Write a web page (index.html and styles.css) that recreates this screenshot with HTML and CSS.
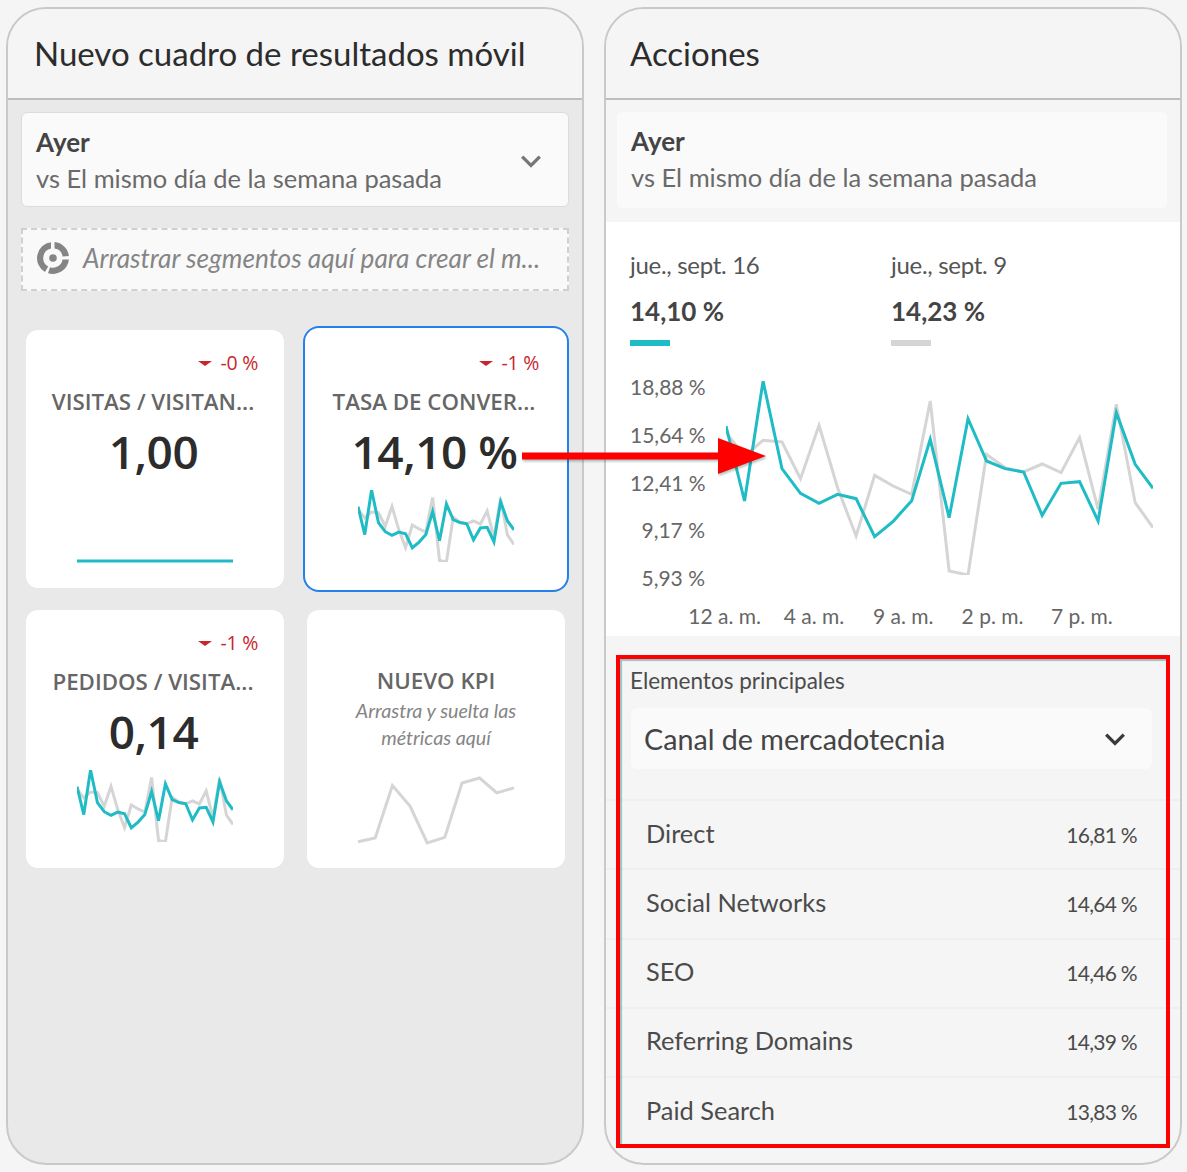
FILE: index.html
```html
<!DOCTYPE html>
<html lang="es">
<head>
    <meta charset="UTF-8">
    <title>Nuevo cuadro de resultados móvil</title>
    <link rel="stylesheet" href="styles.css">
</head>
<body>
    <svg class="defs" width="0" height="0">
        <symbol id="trend" viewBox="318 65 1175 582" preserveAspectRatio="none">
            <polyline class="line-grey" points="318,220 369,290 420,243 472,248 523,358 574,198 625,385 676,530 727,348 778,380 829,405 880,125 932,635 984,647 1035,285 1086,325 1137,338 1188,314 1240,340 1291,235 1342,450 1392,135 1444,430 1493,505"/>
            <polyline class="line-teal" points="318,200 369,425 420,65 472,328 523,402 574,432 625,405 676,418 727,532 778,486 829,424 880,240 932,475 984,178 1035,305 1086,328 1137,338 1188,468 1240,372 1291,367 1342,485 1392,160 1444,315 1493,387"/>
        </symbol>
    </svg>

    <div class="screen">
        <section class="phone phone-left">
            <header class="phone-title">Nuevo cuadro de resultados móvil</header>

            <div class="date-picker">
                <div>
                    <div class="date-main">Ayer</div>
                    <div class="date-sub">vs El mismo día de la semana pasada</div>
                </div>
                <svg class="chevron chevron-grey" viewBox="0 0 20 12"><path d="M2 2l8 8 8-8"/></svg>
            </div>

            <div class="segment-drop">
                <svg class="segment-icon" viewBox="0 0 32 32">
                    <path d="M14 .2A16 16 0 0 0 8 29.9l3.2-5.5A9.6 9.6 0 0 1 14 6.6z"/>
                    <path d="M17.5 .1A16 16 0 0 1 31.9 14l-6.3.4A9.6 9.6 0 0 0 17.5 6.5z"/>
                    <path d="M31.9 17.5A16 16 0 0 1 11 31.2l2-6A9.6 9.6 0 0 0 25.5 17.5z"/>
                    <circle cx="16" cy="16" r="3.8"/>
                </svg>
                <span class="segment-text">Arrastrar segmentos aquí para crear el m...</span>
            </div>

            <div class="kpi-grid">
                <div class="kpi-card">
                    <div class="kpi-delta"><span class="delta-arrow"></span>-0 %</div>
                    <div class="kpi-name">VISITAS / VISITAN...</div>
                    <div class="kpi-value">1,00</div>
                    <svg class="spark spark-flat" viewBox="0 0 156 4"><line class="line-teal" x1="0" y1="2" x2="156" y2="2"/></svg>
                </div>
                <div class="kpi-card kpi-selected">
                    <div class="kpi-delta"><span class="delta-arrow"></span>-1 %</div>
                    <div class="kpi-name">TASA DE CONVER...</div>
                    <div class="kpi-value">14,10 %</div>
                    <svg class="spark"><use href="#trend"/></svg>
                </div>
                <div class="kpi-card">
                    <div class="kpi-delta"><span class="delta-arrow"></span>-1 %</div>
                    <div class="kpi-name">PEDIDOS / VISITA...</div>
                    <div class="kpi-value">0,14</div>
                    <svg class="spark"><use href="#trend"/></svg>
                </div>
                <div class="kpi-card kpi-new">
                    <div class="kpi-name">NUEVO KPI</div>
                    <div class="kpi-hint">Arrastra y suelta las<br>métricas aquí</div>
                    <svg class="spark" viewBox="958 530 426 197" preserveAspectRatio="none">
                        <polyline class="line-grey" points="958,723 1005,712 1052,553 1100,615 1147,727 1195,710 1242,545 1290,530 1337,575 1384,560"/>
                    </svg>
                </div>
            </div>
        </section>

        <section class="phone phone-right">
            <header class="phone-title phone-title-right">Acciones</header>

            <div class="date-plain">
                <div class="date-main">Ayer</div>
                <div class="date-sub">vs El mismo día de la semana pasada</div>
            </div>

            <div class="chart-panel">
                <div class="legend">
                    <div class="legend-item">
                        <div class="legend-date">jue., sept. 16</div>
                        <div class="legend-value">14,10 %</div>
                        <div class="legend-swatch swatch-teal"></div>
                    </div>
                    <div class="legend-item">
                        <div class="legend-date">jue., sept. 9</div>
                        <div class="legend-value">14,23 %</div>
                        <div class="legend-swatch swatch-grey"></div>
                    </div>
                </div>
                <div class="chart-body">
                    <div class="y-axis">
                        <span>18,88 %</span>
                        <span>15,64 %</span>
                        <span>12,41 %</span>
                        <span>9,17 %</span>
                        <span>5,93 %</span>
                    </div>
                    <svg class="main-chart"><use href="#trend"/></svg>
                </div>
                <div class="x-axis">
                    <span>12 a. m.</span>
                    <span>4 a. m.</span>
                    <span>9 a. m.</span>
                    <span>2 p. m.</span>
                    <span>7 p. m.</span>
                </div>
            </div>

            <div class="top-items">
                <div class="top-label">Elementos principales</div>
                <div class="dim-picker">
                    <span>Canal de mercadotecnia</span>
                    <svg class="chevron chevron-dark" viewBox="0 0 20 12"><path d="M2 2l8 8 8-8"/></svg>
                </div>
                <ul class="top-list">
                    <li><span>Direct</span><span class="top-num">16,81 %</span></li>
                    <li><span>Social Networks</span><span class="top-num">14,64 %</span></li>
                    <li><span>SEO</span><span class="top-num">14,46 %</span></li>
                    <li><span>Referring Domains</span><span class="top-num">14,39 %</span></li>
                    <li><span>Paid Search</span><span class="top-num">13,83 %</span></li>
                </ul>
            </div>
        </section>

        <!-- annotations drawn over the screenshots -->
        <svg class="callout-arrow" viewBox="0 0 244 40">
            <path d="M0 16.5h196V2l48 18-48 18V23.5H0z"/>
        </svg>
        <div class="callout-box"></div>
    </div>
</body>
</html>
```

FILE: styles.css
```css
* {
    box-sizing: border-box;
}
body {
    margin: 0;
    background: #f5f5f5;
    font-family: Lato, "Open Sans", sans-serif;
    color: #4b4b4b;
}
.defs {
    position: absolute;
}
.screen {
    position: relative;
    width: 1187px;
    height: 1172px;
    padding: 7px 5px 7px 6px;
    display: flex;
    gap: 20px;
}
.phone {
    flex: none;
    width: 578px;
    height: 1158px;
    border: 2px solid #c9c9c9;
    border-radius: 40px;
    overflow: hidden;
}
.phone-left {
    background: #e9e9e9;
}
.phone-right {
    background: #f5f5f5;
}
.phone-title {
    height: 91px;
    padding: 23px 0 0 26px;
    background: #f5f5f5;
    border-bottom: 2px solid #bdbdbd;
    font-size: 33px;
    line-height: 42px;
    color: #2c2c2c;
}
.phone-title-right {
    padding-left: 24px;
}

.date-picker {
    margin: 12px 13px 0;
    width: 548px;
    height: 95px;
    padding: 14px 14px 12px;
    background: #fafafa;
    border: 1px solid #dcdcdc;
    border-radius: 6px;
    display: flex;
    align-items: center;
    justify-content: space-between;
}
.date-plain {
    margin: 12px 11px 0;
    width: 550px;
    height: 96px;
    padding: 12px 14px;
    background: #fafafa;
    border-radius: 6px;
}
.date-main {
    font-size: 26px;
    line-height: 35px;
    font-weight: 700;
    color: #444;
}
.date-sub {
    font-size: 25.5px;
    line-height: 36px;
    color: #6a6a6a;
}
.chevron {
    fill: none;
    stroke-width: 3;
    flex: none;
}
.chevron-grey {
    width: 22px;
    height: 14px;
    margin-right: 12px;
    stroke: #777;
}
.chevron-dark {
    width: 22px;
    height: 14px;
    stroke: #3a3a3a;
}

.segment-drop {
    margin: 21px 13px 0;
    width: 548px;
    height: 63px;
    padding: 0 14px 4px;
    background: #f9f9f9;
    border: 2px dashed #d0d0d0;
    display: flex;
    align-items: center;
    gap: 14px;
}
.segment-icon {
    width: 32px;
    height: 32px;
    fill: #858585;
    flex: none;
}
.segment-text {
    font-size: 26.2px;
    font-style: italic;
    color: #858585;
    white-space: nowrap;
}

.kpi-grid {
    margin: 39px 0 0 18px;
    display: grid;
    grid-template-columns: 258px 258px;
    grid-auto-rows: 258px;
    gap: 22px 23px;
}
.kpi-card {
    background: #fff;
    border-radius: 12px;
    padding: 21px 26px 0;
    text-align: center;
    font-family: "Open Sans", sans-serif;
}
.kpi-selected {
    box-shadow: 0 0 0 2px #fff, 0 0 0 4px #2680eb;
}
.kpi-delta {
    height: 24px;
    font-size: 19.5px;
    line-height: 24px;
    letter-spacing: -0.3px;
    color: #c9252d;
    display: flex;
    justify-content: flex-end;
    align-items: center;
    gap: 9px;
}
.delta-arrow {
    width: 0;
    height: 0;
    border-left: 7px solid transparent;
    border-right: 7px solid transparent;
    border-top: 5px solid #c9252d;
}
.kpi-name {
    margin: 13px -2px 0 -6px;
    font-size: 22.3px;
    line-height: 28px;
    font-weight: 600;
    color: #666;
    white-space: nowrap;
}
.kpi-value {
    margin-top: 5px;
    padding-right: 3px;
    font-size: 46px;
    line-height: 60px;
    letter-spacing: -0.5px;
    font-weight: 600;
    color: #2c2c2c;
    white-space: nowrap;
}
.spark {
    display: block;
    width: 156px;
    height: 72px;
    margin: 9px auto 0;
    overflow: visible;
}
.spark-flat {
    height: 4px;
    margin-top: 78px;
}
.kpi-new {
    padding-top: 57px;
}
.kpi-new .kpi-name {
    margin: 0 -4px;
}
.kpi-new .spark {
    height: 65px;
    margin-top: 27px;
}
.kpi-hint {
    margin-top: 2px;
    font-size: 19.7px;
    line-height: 27px;
    font-style: italic;
    font-family: Lato, sans-serif;
    color: #858585;
}
.line-teal,
.line-grey {
    fill: none;
    vector-effect: non-scaling-stroke;
    stroke-width: 3px;
}
.line-teal {
    stroke: #1fbcc5;
}
.line-grey {
    stroke: #d5d5d5;
}

.chart-panel {
    margin-top: 14px;
    height: 414px;
    background: #fff;
    padding: 25px 0 0 24px;
}
.legend {
    display: flex;
}
.legend-item {
    width: 261px;
}
.legend-date {
    font-size: 24px;
    line-height: 35px;
    letter-spacing: -0.3px;
    color: #555;
}
.legend-value {
    margin-top: 11px;
    font-size: 26px;
    line-height: 36px;
    font-weight: 700;
    color: #444;
}
.legend-swatch {
    width: 40px;
    height: 6px;
    margin-top: 11px;
}
.swatch-teal {
    background: #1fbcc5;
}
.swatch-grey {
    background: #d5d5d5;
}
.chart-body {
    margin-top: 35px;
    display: flex;
    align-items: flex-start;
}
.y-axis {
    width: 75px;
    margin-top: -18px;
    display: flex;
    flex-direction: column;
    text-align: right;
    font-size: 21px;
    line-height: 48px;
    height: 240px;
    color: #666;
    white-space: nowrap;
}
.y-axis span {
    height: 47.8px;
}
.main-chart {
    display: block;
    width: 427px;
    height: 194px;
    margin-left: 21px;
    overflow: visible;
}
.x-axis {
    margin: -2px 0 0 50px;
    display: flex;
    font-size: 21px;
    line-height: 30px;
    color: #666;
    white-space: nowrap;
}
.x-axis span {
    width: 89.3px;
    text-align: center;
}

.top-items {
    padding-top: 30px;
}
.top-label {
    margin-left: 24px;
    font-size: 22.5px;
    line-height: 30px;
    color: #4b4b4b;
}
.dim-picker {
    margin: 12px 0 0 25px;
    width: 521px;
    height: 61px;
    padding: 0 26px 0 13px;
    background: #fafafa;
    border-radius: 6px;
    display: flex;
    align-items: center;
    justify-content: space-between;
    font-size: 28.7px;
    color: #444;
}
.top-list {
    list-style: none;
    margin: 30px 0 0;
    padding: 0;
}
.top-list li {
    height: 69.25px;
    padding: 0 43px 4px 40px;
    border-top: 2px solid #efefef;
    display: flex;
    align-items: center;
    justify-content: space-between;
    font-size: 25.4px;
    color: #4b4b4b;
}
.top-num {
    margin-top: 3px;
    font-size: 21px;
    letter-spacing: -0.7px;
}

.callout-arrow {
    position: absolute;
    left: 522px;
    top: 436px;
    width: 244px;
    height: 40px;
    fill: #fe0000;
    filter: drop-shadow(1px 2px 1px rgba(0, 60, 60, 0.3));
}
.callout-box {
    position: absolute;
    left: 616px;
    top: 655px;
    width: 554px;
    height: 493px;
    border: 4px solid #fe0000;
    box-shadow: inset 2px 2px 1px rgba(40, 130, 130, 0.45);
}
```
